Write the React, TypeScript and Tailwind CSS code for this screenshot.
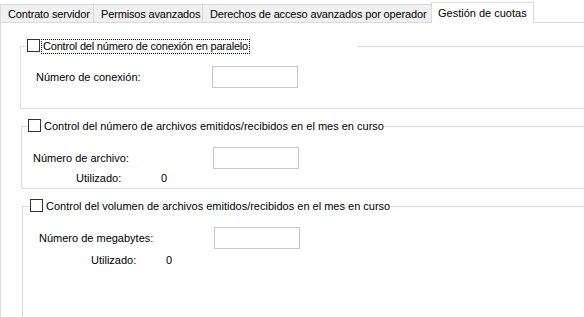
const line = "bg-[#dcdcdc]";

function Checkbox({ className = "" }: { className?: string }) {
    return <span className={`block w-[13px] h-[13px] border border-[#333] bg-white shrink-0 ${className}`} />;
}

function Field({ label, labelPad, labelWidth }: { label: string; labelPad: string; labelWidth: string }) {
    return (
        <div className={`flex items-center h-[22px] ${labelPad}`}>
            <span className={`${labelWidth} shrink-0`}>{label}</span>
            <span className="block w-[86px] h-[22px] border border-[#c8c8c8] bg-white" />
        </div>
    );
}

export default function App() {
    const tabs = [
        { label: "Contrato servidor", w: "w-[93px]" },
        { label: "Permisos avanzados", w: "w-[109px]" },
        { label: "Derechos de acceso avanzados por operador", w: "w-[229px]" },
    ];

    return (
        <div className="w-[584px] h-[317px] bg-white overflow-hidden text-[11px] leading-[14px] text-black flex flex-col" style={{ fontFamily: '"Liberation Sans", Arial, sans-serif' }}>
            {/* Tab strip */}
            <div className="flex items-end h-[23px] shrink-0 tracking-[-0.15px]">
                {tabs.map((t) => (
                    <div key={t.label} className={`${t.w} h-[19px] shrink-0 bg-[#f0f0f0] border-t border-l border-b border-[#d9d9d9] pl-[7px] flex items-center whitespace-nowrap`}>
                        {t.label}
                    </div>
                ))}
                <div className="w-[103px] h-[21px] shrink-0 bg-white border-t border-l border-r border-[#d9d9d9] pl-[6px] flex items-center whitespace-nowrap tracking-normal">
                    Gestión de cuotas
                </div>
                <div className="flex-1 h-full border-b border-[#d9d9d9]" />
            </div>

            {/* Page */}
            <div className="flex-1 border-l border-[#d9d9d9] flex flex-col">
                {/* Group 1 */}
                <div className="mt-[23px] ml-[19px] h-[63px] border-l border-b border-[#dcdcdc]">
                    <div className="-mt-[7px] flex items-start h-[14px]">
                        <div className={`w-[6px] h-px mt-[7px] ${line}`} />
                        <Checkbox />
                        <span className="ml-[1px] w-[209px] h-[15px] border border-dotted border-black pl-[1px] leading-[13px] whitespace-nowrap tracking-[-0.2px]">
                            Control del número de conexión en paralelo
                        </span>
                        <div className="w-[107px]" />
                        <div className={`flex-1 h-px mt-[7px] ${line}`} />
                    </div>
                    <div className="mt-[13px]">
                        <Field label="Número de conexión:" labelPad="pl-[15px]" labelWidth="w-[176px]" />
                    </div>
                </div>

                {/* Group 2 */}
                <div className="mt-[17px] ml-[20px] h-[63px] border-l border-b border-[#dcdcdc]">
                    <div className="-mt-[7px] flex items-start h-[14px]">
                        <div className={`w-[6px] h-px mt-[7px] ${line}`} />
                        <Checkbox />
                        <span className="ml-[3px] whitespace-nowrap">
                            Control del número de archivos emitidos/recibidos en el mes en curso
                        </span>
                        <div className={`flex-1 h-px mt-[7px] ${line}`} />
                    </div>
                    <div className="mt-[14px]">
                        <Field label="Número de archivo:" labelPad="pl-[11px]" labelWidth="w-[180px]" />
                    </div>
                    <div className="mt-[2px] flex pl-[54px]">
                        <span className="w-[85px]">Utilizado:</span>
                        <span>0</span>
                    </div>
                </div>

                {/* Group 3 */}
                <div className="mt-[17px] ml-[21px] flex-1 border-l border-[#dcdcdc]">
                    <div className="-mt-[7px] flex items-start h-[14px]">
                        <div className={`w-[7px] h-px mt-[7px] ${line}`} />
                        <Checkbox />
                        <span className="ml-[3px] whitespace-nowrap">
                            Control del volumen de archivos emitidos/recibidos en el mes en curso
                        </span>
                        <div className={`flex-1 h-px mt-[7px] ${line}`} />
                    </div>
                    <div className="mt-[14px]">
                        <Field label="Número de megabytes:" labelPad="pl-[16px]" labelWidth="w-[175px]" />
                    </div>
                    <div className="mt-[4px] flex pl-[68px]">
                        <span className="w-[75px]">Utilizado:</span>
                        <span>0</span>
                    </div>
                </div>
            </div>
        </div>
    );
}
